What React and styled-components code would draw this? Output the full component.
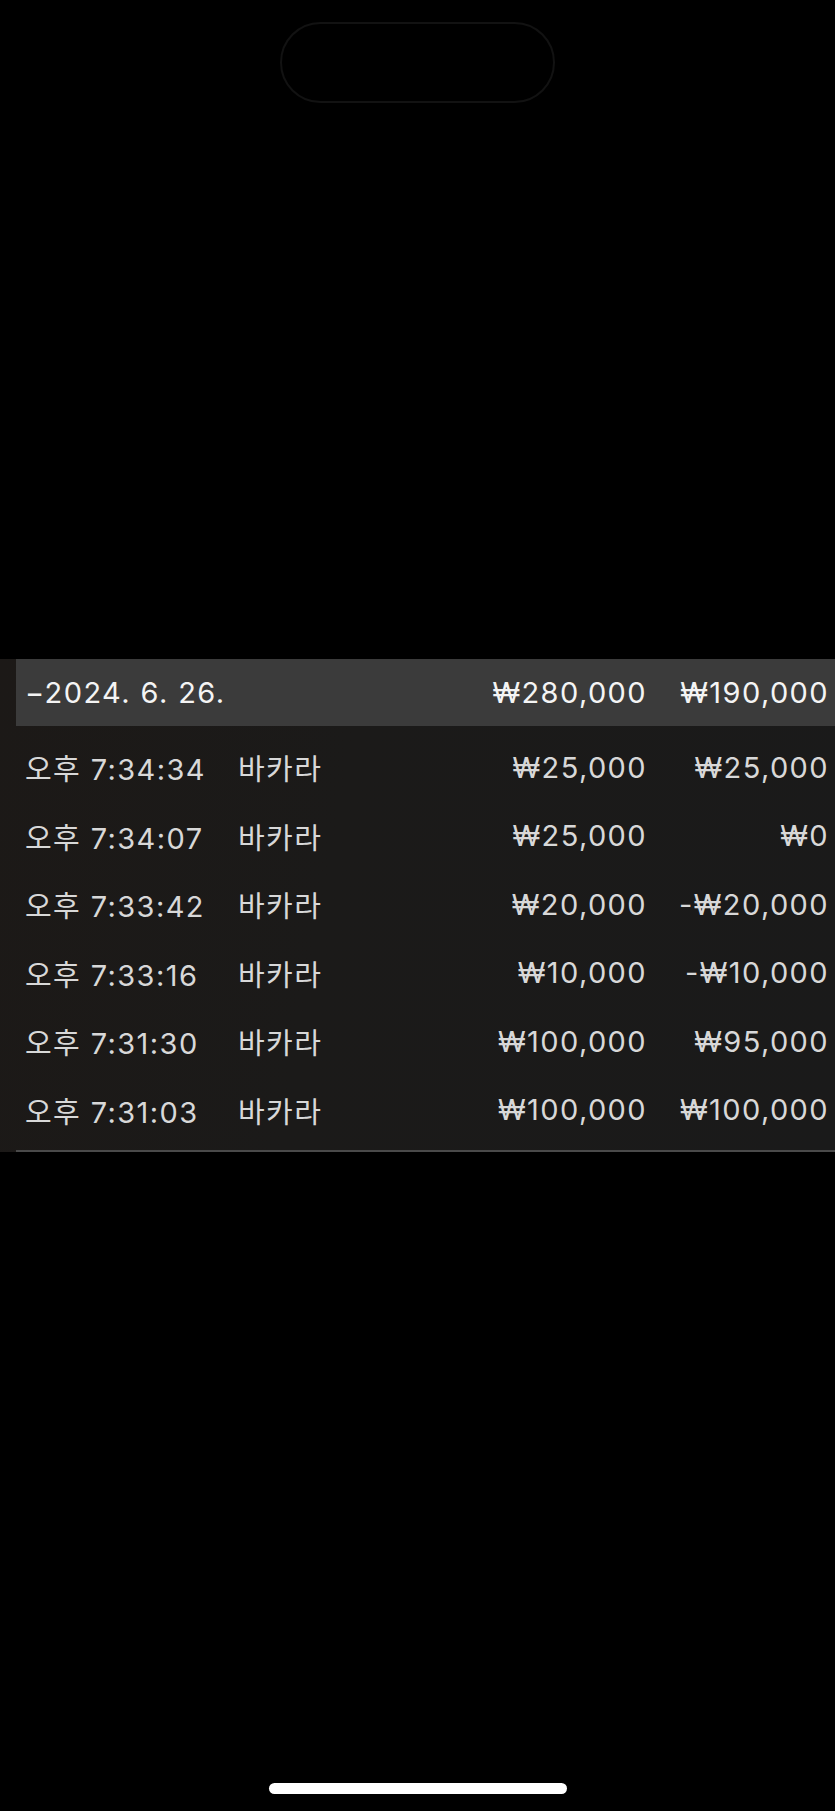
import styled, { createGlobalStyle } from "styled-components";

const GlobalStyle = createGlobalStyle`
    html, body {
        margin: 0;
        padding: 0;
        background: #000;
    }
    body {
        font-family: Inter, "Noto Sans CJK KR", sans-serif;
    }
`;

const Screen = styled.main`
    width: 835px;
    min-height: 1811px;
    background: #000;
    display: flex;
    flex-direction: column;
    align-items: center;
`;

const Island = styled.div`
    margin-top: 22px;
    width: 275px;
    height: 81px;
    box-sizing: border-box;
    border: 2px solid #121212;
    border-radius: 41px;
`;

const Table = styled.section`
    margin-top: 556px;
    width: 100%;
    background: linear-gradient(100deg, #1c1917 0%, #1b1a19 40%, #1a1a1a 100%);
    font-size: 29px;
    letter-spacing: 1.4px;
`;

const Row = styled.div`
    display: grid;
    grid-template-columns: 213px 1fr 160px 182px;
    align-items: center;
    padding: 0 6px 0 ${(p) => (p.$head ? "9px" : "25px")};
    margin-left: ${(p) => (p.$head ? "16px" : "0")};
    height: ${(p) => (p.$head ? "67px" : "68.5px")};
    background: ${(p) => (p.$head ? "#3b3b3b" : "transparent")};
    color: ${(p) => (p.$head ? "#f4f4f4" : "#d8d8d8")};
`;

const Body = styled.div`
    padding: 7px 0 6px;
`;

const DateCell = styled.span`
    grid-column: 1 / 3;
`;

const Cell = styled.span`
    white-space: nowrap;
    text-align: ${(p) => (p.$right ? "right" : "left")};
`;

const Rule = styled.div`
    margin-left: 16px;
    height: 2px;
    background: #4a4a4a;
`;

const HomeBar = styled.div`
    margin-top: 631px;
    width: 298px;
    height: 11px;
    border-radius: 6px;
    background: #fff;
`;

const rows = [
    ["오후 7:34:34", "바카라", "₩25,000", "₩25,000"],
    ["오후 7:34:07", "바카라", "₩25,000", "₩0"],
    ["오후 7:33:42", "바카라", "₩20,000", "-₩20,000"],
    ["오후 7:33:16", "바카라", "₩10,000", "-₩10,000"],
    ["오후 7:31:30", "바카라", "₩100,000", "₩95,000"],
    ["오후 7:31:03", "바카라", "₩100,000", "₩100,000"],
];

const App = () => {
    return (
        <>
            <GlobalStyle />
            <Screen>
                <Island />
                <Table>
                    <Row $head>
                        <DateCell>−2024. 6. 26.</DateCell>
                        <Cell $right>₩280,000</Cell>
                        <Cell $right>₩190,000</Cell>
                    </Row>
                    <Body>
                        {rows.map((r) => (
                            <Row key={r[0]}>
                                <Cell>{r[0]}</Cell>
                                <Cell>{r[1]}</Cell>
                                <Cell $right>{r[2]}</Cell>
                                <Cell $right>{r[3]}</Cell>
                            </Row>
                        ))}
                    </Body>
                    <Rule />
                </Table>
                <HomeBar />
            </Screen>
        </>
    );
};

export default App;
